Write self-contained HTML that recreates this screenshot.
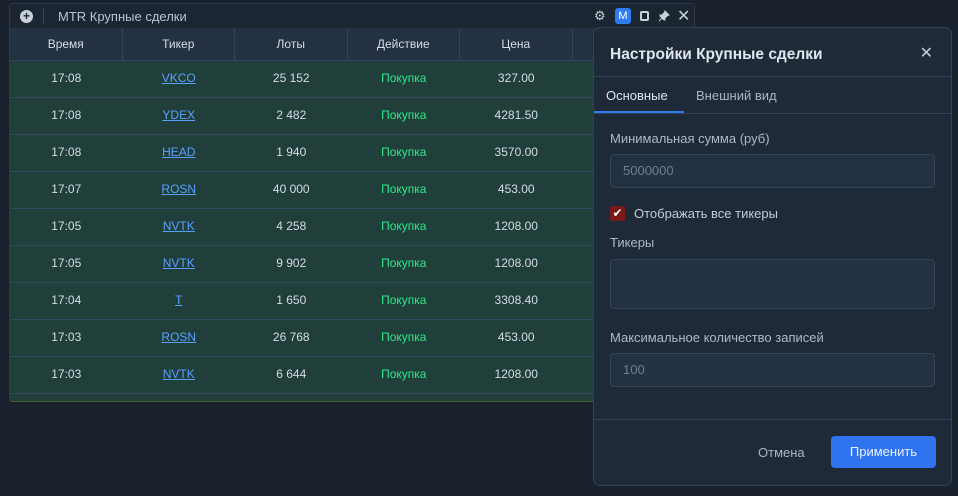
<!DOCTYPE html>
<html><head><meta charset="utf-8"><style>
*{box-sizing:border-box;margin:0;padding:0}
body{width:958px;height:496px;background:#19212c;font-family:"Liberation Sans",sans-serif;position:relative;overflow:hidden;color:#d6dde6}
.w{position:absolute;left:9px;top:3px;width:686px;height:399px;border:1px solid #2d3b4d;border-bottom-color:#4d5e2c;border-radius:3px;background:#1e2835;overflow:hidden}
.tb{height:24px;background:#1c2633;display:flex;align-items:center;font-size:13px;color:#b8c3d0;position:relative}
.tb .plus{width:13px;height:13px;border-radius:50%;background:#c8d0da;color:#1c2633;font-size:12px;font-weight:bold;line-height:13px;text-align:center;margin-left:10px}
.tb .sep{width:1px;height:16px;background:#37465a;margin:0 14px 0 10px}
.ic{position:absolute;top:4px;font-size:13px;color:#c8d0da}
.hd{height:33px;background:#243142;display:flex;border-bottom:1px solid #33445a}
.c{width:112.5px;text-align:center;font-size:12px;line-height:33px;border-right:1px solid #33445a}
.row{height:37px;background:#213f3a;display:flex;border-bottom:1px solid #34495e}
.row .c{line-height:35px;border-right:none;color:#d4dce4}
.row .t{color:#5aa0ff;text-decoration:underline}
.row .b{color:#2ee88a}
.m{position:absolute;left:593px;top:27px;width:359px;height:459px;background:#1f2a38;border:1px solid #33425a;border-radius:7px}
.m h1{font-size:15.5px;font-weight:bold;position:absolute;left:16px;top:18px;color:#e0e6ee}
.x{position:absolute;right:18px;top:15px;font-size:16px;color:#c5ced9}
.line{position:absolute;left:0;right:0;height:1px;background:#33425a}
.tab{position:absolute;top:60px;font-size:13px;color:#aab6c4}
.lbl{position:absolute;left:16px;font-size:13px;color:#aeb9c6}
.inp{position:absolute;left:16px;width:325px;background:#243142;border:1px solid #344457;border-radius:4px;font-size:13px;color:#6f7d8d;padding-left:12px}
</style></head><body>
<div class="w">
<div class="tb"><div class="plus">+</div><div class="sep"></div>MTR Крупные сделки
<span class="ic" style="left:584px">⚙</span>
<span style="position:absolute;left:605px;top:4px;width:16px;height:16px;background:#2f7bf0;border-radius:3px;color:#fff;font-size:11px;text-align:center;line-height:16px">M</span>
<span style="position:absolute;left:630px;top:7px;width:9px;height:10px;border:2px solid #c8d0da;border-radius:2px"></span>
<svg style="position:absolute;left:648px;top:6px" width="12" height="12" viewBox="0 0 12 12"><path d="M7 1l4 4-2 1-2 2 0 2-1 0-4-4 0-1 2 0 2-2z M4 8l-3 3" fill="#c8d0da" stroke="#c8d0da" stroke-width="1"/></svg>
<span class="ic" style="left:667px;top:2px;font-size:16px">✕</span>
</div>
<div class="hd"><div class="c">Время</div><div class="c">Тикер</div><div class="c">Лоты</div><div class="c">Действие</div><div class="c">Цена</div><div class="c" style="border:none"></div></div>
<div class="row"><div class="c">17:08</div><div class="c"><span class="t">VKCO</span></div><div class="c">25 152</div><div class="c b">Покупка</div><div class="c">327.00</div></div>
<div class="row"><div class="c">17:08</div><div class="c"><span class="t">YDEX</span></div><div class="c">2 482</div><div class="c b">Покупка</div><div class="c">4281.50</div></div>
<div class="row"><div class="c">17:08</div><div class="c"><span class="t">HEAD</span></div><div class="c">1 940</div><div class="c b">Покупка</div><div class="c">3570.00</div></div>
<div class="row"><div class="c">17:07</div><div class="c"><span class="t">ROSN</span></div><div class="c">40 000</div><div class="c b">Покупка</div><div class="c">453.00</div></div>
<div class="row"><div class="c">17:05</div><div class="c"><span class="t">NVTK</span></div><div class="c">4 258</div><div class="c b">Покупка</div><div class="c">1208.00</div></div>
<div class="row"><div class="c">17:05</div><div class="c"><span class="t">NVTK</span></div><div class="c">9 902</div><div class="c b">Покупка</div><div class="c">1208.00</div></div>
<div class="row"><div class="c">17:04</div><div class="c"><span class="t">T</span></div><div class="c">1 650</div><div class="c b">Покупка</div><div class="c">3308.40</div></div>
<div class="row"><div class="c">17:03</div><div class="c"><span class="t">ROSN</span></div><div class="c">26 768</div><div class="c b">Покупка</div><div class="c">453.00</div></div>
<div class="row"><div class="c">17:03</div><div class="c"><span class="t">NVTK</span></div><div class="c">6 644</div><div class="c b">Покупка</div><div class="c">1208.00</div></div>
<div class="row" style="height:20px;border:none"></div>
</div>
<div class="m">
<h1>Настройки Крупные сделки</h1><span class="x">✕</span>
<div class="line" style="top:48px"></div>
<span class="tab" style="left:12px;color:#dfe5ec">Основные</span><span class="tab" style="left:102px">Внешний вид</span>
<div style="position:absolute;left:0;top:83px;width:90px;height:2px;background:#2f7bf0"></div>
<div class="line" style="top:85px"></div>
<span class="lbl" style="top:103px">Минимальная сумма (руб)</span>
<div class="inp" style="top:126px;height:34px;line-height:32px">5000000</div>
<div style="position:absolute;left:16px;top:178px;width:15px;height:15px;background:#7a1a16;border-radius:2px;color:#fff;font-size:12px;text-align:center;line-height:15px">✔</div>
<span class="lbl" style="left:40px;top:178px;color:#c3ccd6">Отображать все тикеры</span>
<span class="lbl" style="top:207px">Тикеры</span>
<div class="inp" style="top:231px;height:50px"></div>
<span class="lbl" style="top:302px">Максимальное количество записей</span>
<div class="inp" style="top:325px;height:34px;line-height:32px">100</div>
<div class="line" style="top:391px"></div>
<span style="position:absolute;left:164px;top:417px;font-size:13px;color:#aab6c4">Отмена</span>
<div style="position:absolute;left:237px;top:408px;width:105px;height:32px;background:#2f74ee;border-radius:4px;color:#eaf1ff;font-size:13px;text-align:center;line-height:32px">Применить</div>
</div>
</body></html>
